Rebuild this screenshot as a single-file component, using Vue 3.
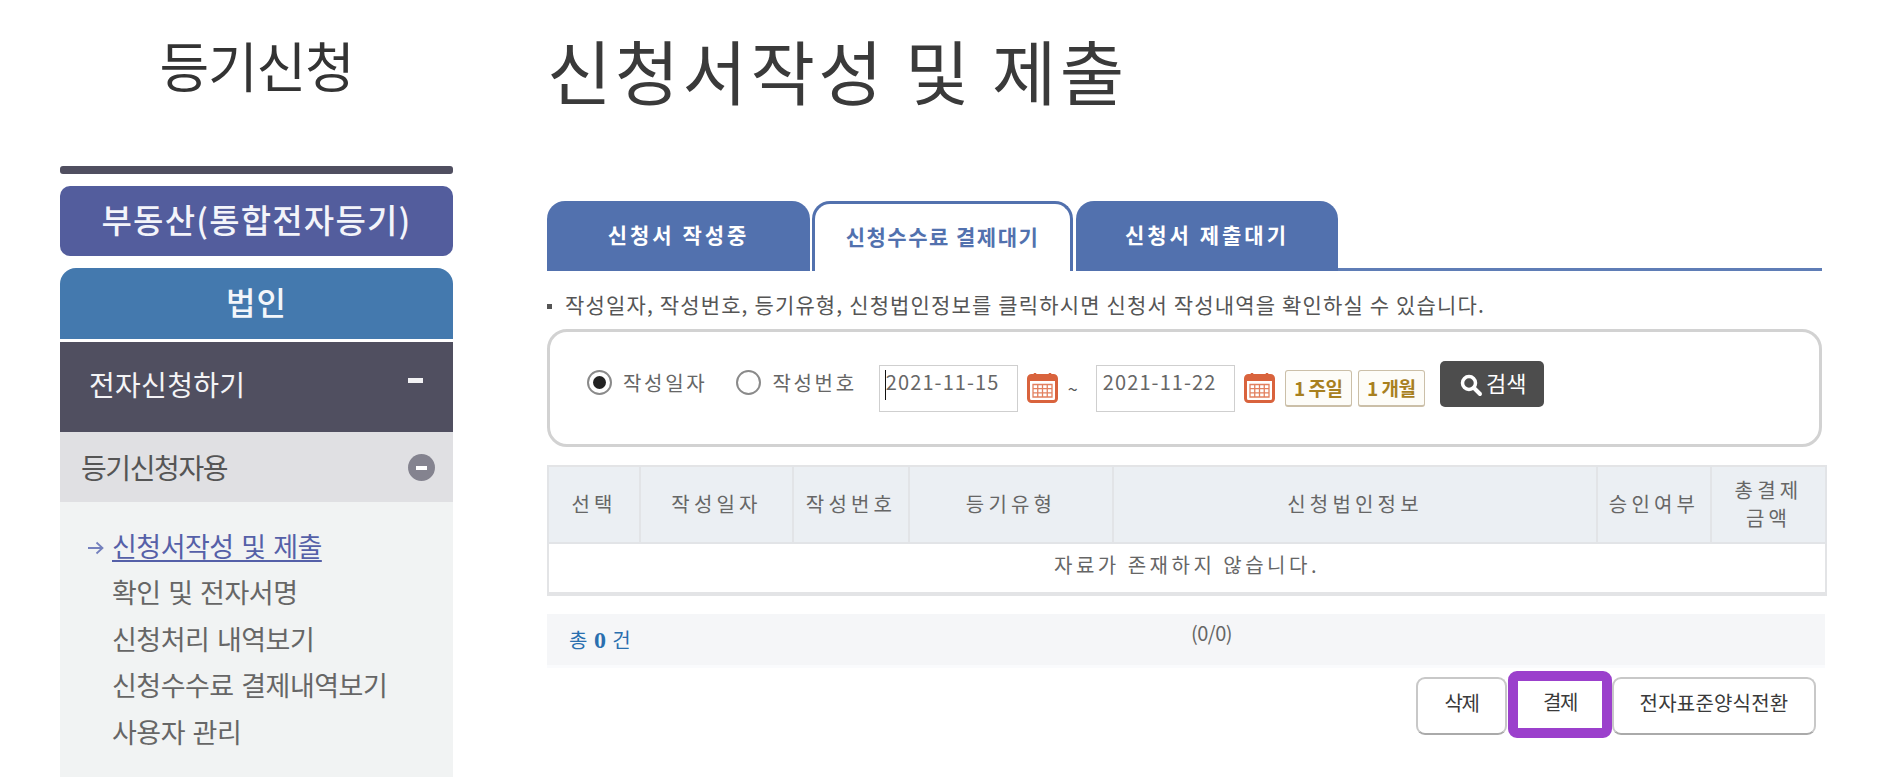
<template>
  <div class="page">
    <!-- 좌측 메뉴 -->
    <aside class="side">
      <h2 class="side-title">등기신청</h2>
      <div class="side-rule"></div>
      <div class="btn-realty">부동산(통합전자등기)</div>
      <div class="btn-corp">법인</div>
      <div class="group-head">
        <span>전자신청하기</span>
        <i class="dash"></i>
      </div>
      <div class="sub-head">
        <span>등기신청자용</span>
        <i class="minus"></i>
      </div>
      <ul class="sub-list">
        <li v-for="(item, i) in menu" :key="item" :class="{ on: i === 0 }">
          <svg v-if="i === 0" class="arrow" width="16" height="14" viewBox="0 0 16 14">
            <path d="M0 7h14M8.500 1.500 14.500 7l-6 5.500" fill="none" stroke="#7480bd" stroke-width="1.800" />
          </svg>
          <span class="menu-text">{{ item }}</span>
        </li>
      </ul>
    </aside>

    <!-- 본문 -->
    <main class="main">
      <h1 class="main-title">신청서작성 및 제출</h1>

      <div class="tabs">
        <div v-for="(tab, i) in tabs" :key="tab.label" :class="['tab', { active: i === 1 }]" :style="{ width: tab.width + 'px' }">
          {{ tab.label }}
        </div>
        <div class="tab-line"></div>
      </div>

      <p class="notice">작성일자, 작성번호, 등기유형, 신청법인정보를 클릭하시면 신청서 작성내역을 확인하실 수 있습니다.</p>

      <div class="search-box">
        <label class="radio first"><i class="dot checked"></i>작성일자</label>
        <label class="radio"><i class="dot"></i>작성번호</label>
        <div class="date caret">2021-11-15</div>
        <svg class="cal" width="31" height="31" viewBox="0 0 31 31">
          <rect x="1.500" y="3.500" width="28" height="26" rx="3" fill="#fff" stroke="#d9633d" stroke-width="3" />
          <rect x="2" y="4" width="27" height="5" fill="#d9633d" />
          <path d="M8 1v5M23 1v5" stroke="#d9633d" stroke-width="2.500" />
          <path d="M6 12.500h19v12.500H6zM10.750 12.500v12.500M15.500 12.500v12.500M20.250 12.500v12.500M6 16.700h19M6 20.900h19" fill="none" stroke="#e2805f" stroke-width="1.300" />
        </svg>
        <span class="tilde">~</span>
        <div class="date second">2021-11-22</div>
        <svg class="cal" width="31" height="31" viewBox="0 0 31 31">
          <rect x="1.500" y="3.500" width="28" height="26" rx="3" fill="#fff" stroke="#d9633d" stroke-width="3" />
          <rect x="2" y="4" width="27" height="5" fill="#d9633d" />
          <path d="M8 1v5M23 1v5" stroke="#d9633d" stroke-width="2.500" />
          <path d="M6 12.500h19v12.500H6zM10.750 12.500v12.500M15.500 12.500v12.500M20.250 12.500v12.500M6 16.700h19M6 20.900h19" fill="none" stroke="#e2805f" stroke-width="1.300" />
        </svg>
        <button class="period week">1 주일</button>
        <button class="period month">1 개월</button>
        <button class="search-btn">
          <svg width="24" height="24" viewBox="0 0 24 24">
            <circle cx="10" cy="10" r="6.500" fill="none" stroke="#fff" stroke-width="3.500" />
            <path d="M15 15l6 6" stroke="#fff" stroke-width="4" stroke-linecap="round" />
          </svg>
          <span>검색</span>
        </button>
      </div>

      <table class="list">
        <colgroup>
          <col v-for="w in colWidths" :key="w.id" :style="{ width: w.px + 'px' }" />
        </colgroup>
        <thead>
          <tr>
            <th>선택</th>
            <th>작성일자</th>
            <th>작성번호</th>
            <th>등기유형</th>
            <th>신청법인정보</th>
            <th>승인여부</th>
            <th>총결제<br />금액</th>
          </tr>
        </thead>
        <tbody>
          <tr>
            <td colspan="7">자료가 존재하지 않습니다.</td>
          </tr>
        </tbody>
      </table>

      <div class="pager">
        <span class="count">총 <b>0</b> 건</span>
        <span class="pages">(0/0)</span>
      </div>

      <div class="actions">
        <button class="act del">삭제</button>
        <button class="act pay">결제</button>
        <button class="act conv">전자표준양식전환</button>
      </div>
    </main>
  </div>
</template>

<script setup>
const menu = ['신청서작성 및 제출', '확인 및 전자서명', '신청처리 내역보기', '신청수수료 결제내역보기', '사용자 관리']

const tabs = [
  { label: '신청서 작성중', width: 263 },
  { label: '신청수수료 결제대기', width: 261 },
  { label: '신청서 제출대기', width: 262 },
]

const colWidths = [
  { id: 1, px: 92 },
  { id: 2, px: 153 },
  { id: 3, px: 116 },
  { id: 4, px: 204 },
  { id: 5, px: 484 },
  { id: 6, px: 114 },
  { id: 7, px: 115 },
]
</script>

<style>
html,
body {
  margin: 0;
  background: #fff;
  overflow: hidden;
}
</style>

<style scoped>
.page {
  display: grid;
  grid-template-columns: 393px 1278px;
  column-gap: 94px;
  padding-left: 60px;
  height: 778px;
  font-family: "Noto Sans CJK KR", "Noto Sans", sans-serif;
  color: #4a4a4a;
  overflow: hidden;
}

/* 좌측 메뉴 */
.side-title {
  height: 166px;
  margin: 0;
  padding-top: 33px;
  box-sizing: border-box;
  text-align: center;
  font-size: 54px;
  line-height: 64px;
  font-weight: 400;
  letter-spacing: -1.200px;
  color: #333;
}

.side-rule {
  height: 8px;
  border-radius: 3px;
  background: #504f60;
}

.btn-realty {
  margin-top: 12px;
  height: 70px;
  border-radius: 10px;
  background: #535d9d;
  color: #f3f4fa;
  text-align: center;
  font-size: 33px;
  font-weight: 500;
  line-height: 66px;
  letter-spacing: 1.200px;
}

.btn-corp {
  margin-top: 12px;
  height: 71px;
  border-radius: 16px 16px 0 0;
  background: #4479ae;
  color: #f3f6fa;
  text-align: center;
  font-size: 32px;
  font-weight: 500;
  line-height: 66px;
  letter-spacing: 1px;
}

.group-head {
  margin-top: 3px;
  height: 90px;
  padding: 0 30px 7px 29px;
  box-sizing: border-box;
  display: flex;
  align-items: center;
  justify-content: space-between;
  background: #504f60;
  color: #f4f4f6;
  font-size: 28px;
  letter-spacing: 0.300px;
}

.dash {
  width: 15px;
  height: 5px;
  margin: 0 0 7px;
  background: #f2f2f4;
}

.sub-head {
  height: 70px;
  padding: 0 18px 0 21px;
  display: flex;
  align-items: center;
  justify-content: space-between;
  background: #e0e0e3;
  color: #555;
  font-size: 28px;
  letter-spacing: -1.400px;
}

.minus {
  position: relative;
  width: 27px;
  height: 27px;
  border-radius: 50%;
  background: #84838f;
}

.minus::after {
  content: "";
  position: absolute;
  left: 8px;
  top: 12px;
  width: 11px;
  height: 4px;
  background: #fff;
}

.sub-list {
  height: 275px;
  margin: 0;
  padding: 21px 0 0 52px;
  box-sizing: border-box;
  list-style: none;
  background: #f1f3f3;
  font-size: 27px;
  line-height: 46.400px;
  letter-spacing: -0.500px;
  word-spacing: 2px;
  color: #666;
}

.sub-list li {
  position: relative;
  white-space: nowrap;
}

.sub-list li.on {
  color: #5560a8;
}

.sub-list li.on .menu-text {
  text-decoration: underline;
  text-decoration-thickness: 2px;
  text-underline-offset: 3px;
}

.arrow {
  position: absolute;
  left: -24px;
  top: 18px;
}

/* 본문 */
.main-title {
  height: 201px;
  margin: 0;
  padding-top: 28px;
  box-sizing: border-box;
  font-size: 70px;
  line-height: 84px;
  font-weight: 400;
  letter-spacing: 3.400px;
  color: #3a3a3a;
  white-space: nowrap;
}

.tabs {
  display: flex;
  width: 1275px;
  height: 70px;
}

.tab {
  box-sizing: border-box;
  height: 70px;
  margin-right: 2px;
  padding-bottom: 4px;
  display: flex;
  align-items: center;
  justify-content: center;
  border-radius: 18px 18px 0 0;
  background: #5271ae;
  color: #fff;
  font-size: 21px;
  font-weight: 700;
  letter-spacing: 3px;
}

.tab.active {
  background: #fff;
  border: 3px solid #5271ae;
  border-bottom: 0;
  color: #5271ae;
  margin-right: 3px;
  letter-spacing: 1.500px;
}

.tab-line {
  flex: 1;
  margin-left: -2px;
  align-self: flex-end;
  height: 3px;
  background: #5f7db6;
}

.notice {
  position: relative;
  height: 58px;
  margin: 0;
  padding: 23px 0 0 18px;
  box-sizing: border-box;
  font-size: 21px;
  line-height: 20px;
  letter-spacing: 1.150px;
  color: #555;
  white-space: nowrap;
}

.notice::before {
  content: "";
  position: absolute;
  left: 0;
  top: 33px;
  width: 5px;
  height: 5px;
  background: #555;
}

.search-box {
  box-sizing: border-box;
  width: 1275px;
  height: 118px;
  padding-left: 37px;
  display: flex;
  align-items: center;
  border: 3px solid #d2d2d2;
  border-radius: 20px;
  font-size: 20px;
}

.radio {
  display: flex;
  align-items: center;
  margin: 0 15px 11px 0;
  color: #666;
  letter-spacing: 2.700px;
}

.radio.first {
  margin-right: 29px;
}

.dot {
  position: relative;
  box-sizing: border-box;
  width: 25px;
  height: 25px;
  margin-right: 11px;
  border: 2px solid #8a8a8a;
  border-radius: 50%;
  background: #fff;
}

.dot.checked::after {
  content: "";
  position: absolute;
  left: 4px;
  top: 4px;
  width: 13px;
  height: 13px;
  border-radius: 50%;
  background: #222;
}

.date {
  position: relative;
  box-sizing: border-box;
  width: 139px;
  height: 47px;
  margin-left: 7px;
  padding: 2px 0 0 6px;
  border: 1px solid #cfcfcf;
  font-size: 20px;
  line-height: 28px;
  letter-spacing: 1.100px;
  color: #666;
}

.caret::after {
  content: "";
  position: absolute;
  left: 5px;
  top: 4px;
  width: 1px;
  height: 30px;
  background: #111;
}

.date.second {
  margin-left: 0;
}

.cal {
  margin: 0 0 1px 9px;
}

.tilde {
  width: 38px;
  padding-left: 10px;
  box-sizing: border-box;
  font-size: 18px;
  color: #555;
}

.period {
  box-sizing: border-box;
  width: 67px;
  height: 37px;
  margin-left: 10px;
  padding: 0;
  border: 1px solid #cbbfa8;
  border-bottom-width: 2px;
  border-radius: 3px;
  background: #fdfcf8;
  color: #a8801f;
  font-family: inherit;
  font-size: 19px;
  font-weight: 700;
  letter-spacing: -0.500px;
}

.period.month {
  margin-left: 6px;
}

.search-btn {
  box-sizing: border-box;
  width: 104px;
  height: 46px;
  margin: 0 0 8px 15px;
  padding: 0 0 4px 2px;
  display: flex;
  align-items: center;
  justify-content: center;
  gap: 3px;
  border: 0;
  border-radius: 5px;
  background: #4d4d4d;
  color: #fff;
  font-family: inherit;
  font-size: 22px;
}

.search-btn svg {
  margin-top: 6px;
}

.list {
  margin-top: 18px;
  width: 1278px;
  table-layout: fixed;
  border-collapse: collapse;
  border: 2px solid #e3e4e6;
  border-bottom-width: 4px;
  font-size: 20px;
  color: #666;
}

.list th {
  height: 73px;
  padding: 0 0 2px;
  background: #ebeff3;
  border: 2px solid #e2e4e7;
  border-top: 0;
  font-weight: 400;
  line-height: 28px;
  letter-spacing: 4.200px;
}

.list td {
  height: 51px;
  padding: 0 0 8px;
  box-sizing: border-box;
  text-align: center;
  background: #fff;
  letter-spacing: 3.500px;
}

.pager {
  position: relative;
  box-sizing: border-box;
  height: 54px;
  margin-top: 18px;
  padding-left: 22px;
  display: flex;
  align-items: center;
  background: #f5f6f8;
  border-bottom: 3px solid #fafbfd;
  font-size: 20px;
}

.count {
  color: #2a6faf;
  word-spacing: 2px;
}

.count b {
  font-family: "Liberation Serif", serif;
  font-size: 24px;
}

.pages {
  position: absolute;
  left: 644px;
  top: 4px;
  font-size: 20px;
  letter-spacing: -0.500px;
  color: #666;
}

.actions {
  display: flex;
  justify-content: flex-end;
  align-items: flex-start;
  height: 67px;
  margin-top: 3px;
  padding-right: 9px;
}

.act {
  box-sizing: border-box;
  height: 58px;
  margin-top: 6px;
  padding: 0 0 8px;
  border: 2px solid #c8c8c8;
  border-bottom-color: #aaa;
  border-radius: 9px;
  background: #fff;
  color: #3a3a3a;
  font-family: inherit;
  font-size: 20px;
  letter-spacing: -1.500px;
}

.del {
  width: 91px;
  margin-right: 1px;
}

.pay {
  width: 104px;
  height: 67px;
  margin-top: 0;
  padding-bottom: 6px;
  border: 10px solid #9b40cc;
  border-radius: 9px;
}

.conv {
  width: 204px;
  letter-spacing: 0.200px;
}
</style>
